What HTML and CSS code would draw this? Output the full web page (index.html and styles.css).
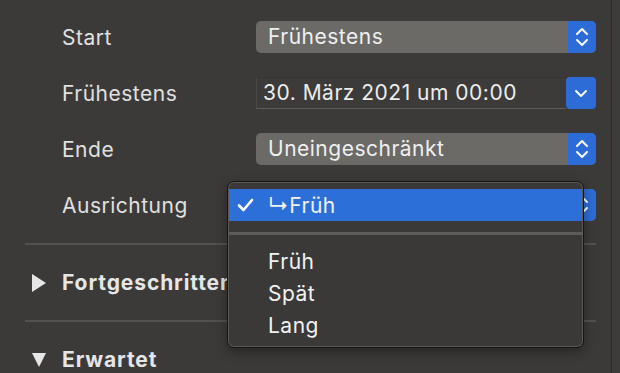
FILE: index.html
```html
<!DOCTYPE html>
<html lang="de">
<head>
  <meta charset="UTF-8" />
  <title>Zeitplan</title>
  <link rel="stylesheet" href="styles.css">
</head>
<body>
  <div class="window">
    <div class="pane">
      <div class="form">
        <span class="label">Start</span>
        <div class="popup">
          <span class="value">Frühestens</span>
          <span class="arrows">
            <svg width="14" height="20" viewBox="0 0 14 20"><path d="M2 7 L7 2 L12 7 M2 13 L7 18 L12 13" fill="none" stroke="#fff" stroke-width="2" stroke-linecap="round" stroke-linejoin="round"/></svg>
          </span>
        </div>

        <span class="label">Frühestens</span>
        <div class="datefield">
          <span class="value">30. März 2021 um 00:00</span>
          <span class="arrows date">
            <svg width="14" height="10" viewBox="0 0 14 10"><path d="M2 3 L7 8 L12 3" fill="none" stroke="#fff" stroke-width="2" stroke-linecap="round" stroke-linejoin="round"/></svg>
          </span>
        </div>

        <span class="label">Ende</span>
        <div class="popup">
          <span class="value">Uneingeschränkt</span>
          <span class="arrows">
            <svg width="14" height="20" viewBox="0 0 14 20"><path d="M2 7 L7 2 L12 7 M2 13 L7 18 L12 13" fill="none" stroke="#fff" stroke-width="2" stroke-linecap="round" stroke-linejoin="round"/></svg>
          </span>
        </div>

        <span class="label">Ausrichtung</span>
        <div class="popup open">
          <span class="value"></span>
          <span class="arrows">
            <svg width="14" height="20" viewBox="0 0 14 20"><path d="M2 7 L7 2 L12 7 M2 13 L7 18 L12 13" fill="none" stroke="#fff" stroke-width="2" stroke-linecap="round" stroke-linejoin="round"/></svg>
          </span>

          <!-- open menu covers the popup -->
          <div class="menu">
            <div class="item selected">
              <span class="check">
                <svg width="17" height="14" viewBox="0 0 17 14"><path d="M2 7.5 L6.5 12 L15 2" fill="none" stroke="#fff" stroke-width="2.6" stroke-linecap="round" stroke-linejoin="round"/></svg>
              </span>
              <span>↳Früh</span>
            </div>
            <div class="menu-sep"></div>
            <div class="item"><span class="check"></span><span>Früh</span></div>
            <div class="item"><span class="check"></span><span>Spät</span></div>
            <div class="item"><span class="check"></span><span>Lang</span></div>
          </div>
        </div>
      </div>

      <div class="sep"></div>
      <div class="disclosure">
        <svg class="tri" width="14" height="18" viewBox="0 0 14 18"><path d="M0 0 L14 9 L0 18 Z" fill="#e6e6e6"/></svg>
        <span class="title">Fortgeschritten</span>
      </div>
      <div class="sep"></div>
      <div class="disclosure">
        <svg class="tri" width="14" height="16" viewBox="0 0 14 16"><path d="M0 1 L14 1 L7 15 Z" fill="#e6e6e6"/></svg>
        <span class="title">Erwartet</span>
      </div>
    </div>
    <div class="edge"></div>
  </div>
</body>
</html>
```

FILE: styles.css
```css
body {
  margin: 0;
  background-color: #3b3a38;
  font-family: Inter, "Noto Sans", "DejaVu Sans", sans-serif;
  color: #e2e2e2;
  letter-spacing: 0.5px;
  overflow: hidden;
}
.window {
  display: flex;
  height: 373px;
  overflow: hidden;
}
.pane {
  width: 571px;
  padding: 21px 15px 0 25px;
}
.edge {
  width: 9px;
  border-left: 1px solid #2c2b29;
  background-color: #3d3c3a;
}
.form {
  display: grid;
  grid-template-columns: 194px 340px;
  row-gap: 24px;
  padding-left: 37px;
  align-items: center;
}
.label {
  font-size: 21px;
  color: #e0e0e0;
}
.popup {
  position: relative;
  display: flex;
  height: 32px;
  border-radius: 5px;
  background-color: #6b6a67;
  font-size: 21px;
  color: #efefef;
}
.value {
  flex: 1;
  padding-left: 12px;
  line-height: 32px;
  white-space: nowrap;
  overflow: hidden;
}
.arrows {
  display: flex;
  align-items: center;
  justify-content: center;
  width: 28px;
  background-color: #2d6cd6;
  border-radius: 0 5px 5px 0;
}
.datefield {
  display: flex;
  height: 32px;
  font-size: 21px;
  color: #ececec;
}
.datefield .value {
  padding-left: 6px;
  background-color: #3c3b39;
  border-top: 1px solid #353432;
  border-left: 1px solid #4b4a48;
  border-bottom: 1px solid #5d5c5a;
  line-height: 30px;
}
.arrows.date {
  width: 30px;
  border-radius: 4px;
}
.menu {
  position: absolute;
  left: -29px;
  top: -8px;
  width: 355px;
  padding: 7px 0 6px;
  background-color: #3a3938;
  border: 1px solid #161616;
  border-radius: 7px;
  box-shadow: inset 0 0 0 1px #5a5957, 0 4px 12px rgba(0, 0, 0, 0.35);
  z-index: 2;
}
.item {
  display: flex;
  align-items: center;
  height: 32px;
  margin: 0 1px;
  font-size: 21px;
  color: #f2f2f2;
}
.item.selected {
  background-color: #2c6fd9;
}
.check {
  width: 31px;
  padding-left: 8px;
  display: flex;
  align-items: center;
}
.menu-sep {
  height: 3px;
  margin: 11px 1px 10px;
  background-color: #5d5c5a;
}
.sep {
  height: 2px;
  margin-top: 22px;
  background-color: #52514f;
}
.sep + .disclosure {
  height: 75px;
}
.disclosure {
  display: flex;
  align-items: center;
  padding-left: 7px;
  gap: 16px;
}
.disclosure .title {
  font-size: 21px;
  font-weight: 700;
  letter-spacing: 0.9px;
  color: #e6e6e6;
  white-space: nowrap;
}
.disclosure + .sep {
  margin-top: 0;
}
```
